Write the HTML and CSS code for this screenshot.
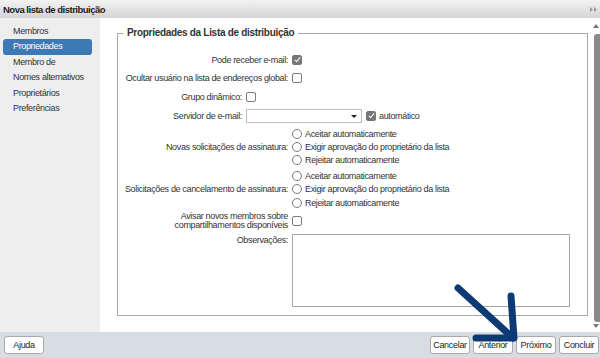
FILE: index.html
```html
<!DOCTYPE html>
<html lang="pt">
<head>
  <meta charset="UTF-8">
  <meta name="viewport" content="width=device-width, initial-scale=1.0">
  <title>Nova lista de distribuição</title>
  <link rel="stylesheet" href="styles.css">
</head>
<body>
  <div class="dialog">
    <div class="titlebar">
      <span class="title">Nova lista de distribuição</span>
      <svg class="expand" width="7" height="5" viewBox="0 0 7 5"><path d="M0 0L3 2.5L0 5ZM4 0L7 2.5L4 5Z" fill="#9a9a9a"/></svg>
    </div>

    <div class="main">
      <ul class="sidebar">
        <li>Membros</li>
        <li class="active">Propriedades</li>
        <li>Membro de</li>
        <li>Nomes alternativos</li>
        <li>Proprietários</li>
        <li>Preferências</li>
      </ul>

      <div class="content">
        <fieldset class="props">
          <legend>Propriedades da Lista de distribuição</legend>
          <div class="form">
            <div class="row r18">
              <label class="lbl">Pode receber e-mail:</label>
              <span class="check on"></span>
            </div>
            <div class="row r18">
              <label class="lbl">Ocultar usuário na lista de endereços global:</label>
              <span class="check"></span>
            </div>
            <div class="row r19 narrow">
              <label class="lbl">Grupo dinâmico:</label>
              <span class="check"></span>
            </div>
            <div class="row r19 narrow">
              <label class="lbl">Servidor de e-mail:</label>
              <span class="select"><span class="caret"></span></span>
              <span class="check on"></span>
              <span class="opt-text">automático</span>
            </div>

            <div class="row group">
              <label class="lbl">Novas solicitações de assinatura:</label>
              <div class="radios">
                <div class="radio-item"><span class="radio"></span>Aceitar automaticamente</div>
                <div class="radio-item"><span class="radio"></span>Exigir aprovação do proprietário da lista</div>
                <div class="radio-item"><span class="radio"></span>Rejeitar automaticamente</div>
              </div>
            </div>
            <div class="row group">
              <label class="lbl">Solicitações de cancelamento de assinatura:</label>
              <div class="radios">
                <div class="radio-item"><span class="radio"></span>Aceitar automaticamente</div>
                <div class="radio-item"><span class="radio"></span>Exigir aprovação do proprietário da lista</div>
                <div class="radio-item"><span class="radio"></span>Rejeitar automaticamente</div>
              </div>
            </div>

            <div class="row notify">
              <label class="lbl two-line">Avisar novos membros sobre<br>compartilhamentos disponíveis</label>
              <span class="check"></span>
            </div>
            <div class="row notes">
              <label class="lbl">Observações:</label>
              <div class="textarea"></div>
            </div>
          </div>
        </fieldset>
      </div>

      <div class="scrollbar">
        <span class="arrow up"></span>
        <span class="thumb"></span>
        <span class="arrow down"></span>
      </div>
    </div>

    <div class="footer">
      <button class="btn">Ajuda</button>
      <div class="actions">
        <button class="btn">Cancelar</button>
        <button class="btn">Anterior</button>
        <button class="btn">Próximo</button>
        <button class="btn">Concluir</button>
      </div>
    </div>

    <!-- callout arrow pointing at "Próximo" -->
    <svg class="callout" width="600" height="358" viewBox="0 0 600 358">
      <g fill="none" stroke="#0b3a74" stroke-width="7" stroke-linecap="round" stroke-linejoin="round">
        <path d="M458 288L513 338"/>
        <path d="M511 296L514 338L476 338"/>
      </g>
    </svg>
  </div>
</body>
</html>
```

FILE: styles.css
```css
body {
  margin: 0;
  font-family: "Liberation Sans", Arial, sans-serif;
  font-size: 9px;
  letter-spacing: -0.35px;
  color: #333;
  overflow: hidden;
}
.dialog {
  position: relative;
  width: 600px;
  height: 358px;
  display: flex;
  flex-direction: column;
}
.titlebar {
  height: 18px;
  display: flex;
  align-items: center;
  justify-content: space-between;
  padding: 0 3px 0 3px;
  background: linear-gradient(#f3f3f3, #d4d4d4);
}
.title {
  font-weight: bold;
  font-size: 9.5px;
  letter-spacing: -0.5px;
  color: #222;
}
.main {
  flex: 1;
  display: flex;
  min-height: 0;
}
.sidebar {
  width: 100px;
  margin: 0;
  padding: 6px 0 0 0;
  list-style: none;
  background-color: #eeeeee;
}
.sidebar li {
  height: 15.4px;
  line-height: 15px;
  margin: 0 8px 0 3px;
  padding-left: 10px;
  color: #333;
  white-space: nowrap;
}
.sidebar li.active {
  background-color: #3d79b4;
  border-radius: 3px;
  color: white;
}
.content {
  flex: 1;
  background-color: white;
  padding: 8px 0 16px 17px;
  display: flex;
}
.props {
  flex: 1;
  margin: 0;
  padding: 0;
  border: 1px solid #a8a8a8;
}
.props legend {
  margin-left: 5px;
  padding: 0 4px;
  font-weight: bold;
  font-size: 10px;
  letter-spacing: -0.3px;
  line-height: 14px;
  color: #333;
}
.form {
  padding: 11px 0 0 0;
}
.row {
  display: flex;
  align-items: center;
}
.r18 { height: 18px; }
.r19 { height: 19px; }
.lbl {
  width: 170px;
  flex: none;
  text-align: right;
  padding-right: 4px;
  white-space: nowrap;
}
.narrow .lbl {
  width: 124px;
}
.check {
  width: 8px;
  height: 8px;
  border: 1px solid #7a7a7a;
  border-radius: 2px;
  background-color: white;
  flex: none;
  position: relative;
}
.check.on {
  background-color: #777;
  border-color: #777;
}
.check.on::after {
  content: "";
  position: absolute;
  left: 2.5px;
  top: 0px;
  width: 2px;
  height: 5px;
  border: solid white;
  border-width: 0 1.5px 1.5px 0;
  transform: rotate(40deg);
}
.select {
  width: 114px;
  height: 12px;
  border: 1px solid #bdbdbd;
  background-color: white;
  position: relative;
  margin-right: 4px;
  flex: none;
}
.caret {
  position: absolute;
  right: 4px;
  top: 5px;
  border: 3px solid transparent;
  border-top: 3px solid #222;
  border-bottom: none;
}
.opt-text {
  margin-left: 3px;
}
.group {
  align-items: center;
  margin-top: 2px;
}
.radios {
  display: flex;
  flex-direction: column;
}
.radio-item {
  height: 13.4px;
  display: flex;
  align-items: center;
}
.radio {
  width: 8px;
  height: 8px;
  border: 1px solid #7a7a7a;
  border-radius: 50%;
  margin-right: 3px;
  flex: none;
}
.notify {
  margin-top: 3px;
  height: 18px;
}
.two-line {
  line-height: 9px;
}
.notes {
  align-items: flex-start;
  margin-top: 4px;
}
.notes .lbl {
  line-height: 12px;
}
.textarea {
  width: 276px;
  height: 71px;
  border: 1px solid #a8a8a8;
  background-color: white;
}
.scrollbar {
  width: 12px;
  background-color: white;
  display: flex;
  flex-direction: column;
  align-items: flex-end;
  padding: 6px 0 4px 0;
}
.arrow {
  width: 0;
  height: 0;
  border: 3px solid transparent;
  margin-right: 1px;
}
.arrow.up {
  border-bottom: 4px solid #777;
  border-top: none;
}
.arrow.down {
  border-top: 4px solid #777;
  border-bottom: none;
}
.thumb {
  flex: 1;
  width: 6px;
  margin: 6px 0 2px 0;
  background-color: #8a8a8a;
  border-radius: 3px 0 0 3px;
}
.footer {
  height: 26px;
  background-color: #d8dde3;
  display: flex;
  align-items: center;
  justify-content: space-between;
  padding: 0 1px 0 4px;
}
.actions {
  display: flex;
  gap: 3px;
}
.btn {
  width: 40px;
  height: 18px;
  padding: 0;
  font-family: inherit;
  font-size: 9px;
  letter-spacing: -0.3px;
  color: #222;
  background: white;
  border: 1px solid #a9a9a9;
  border-radius: 3px;
}
.callout {
  position: absolute;
  left: 0;
  top: 0;
  pointer-events: none;
}
```
